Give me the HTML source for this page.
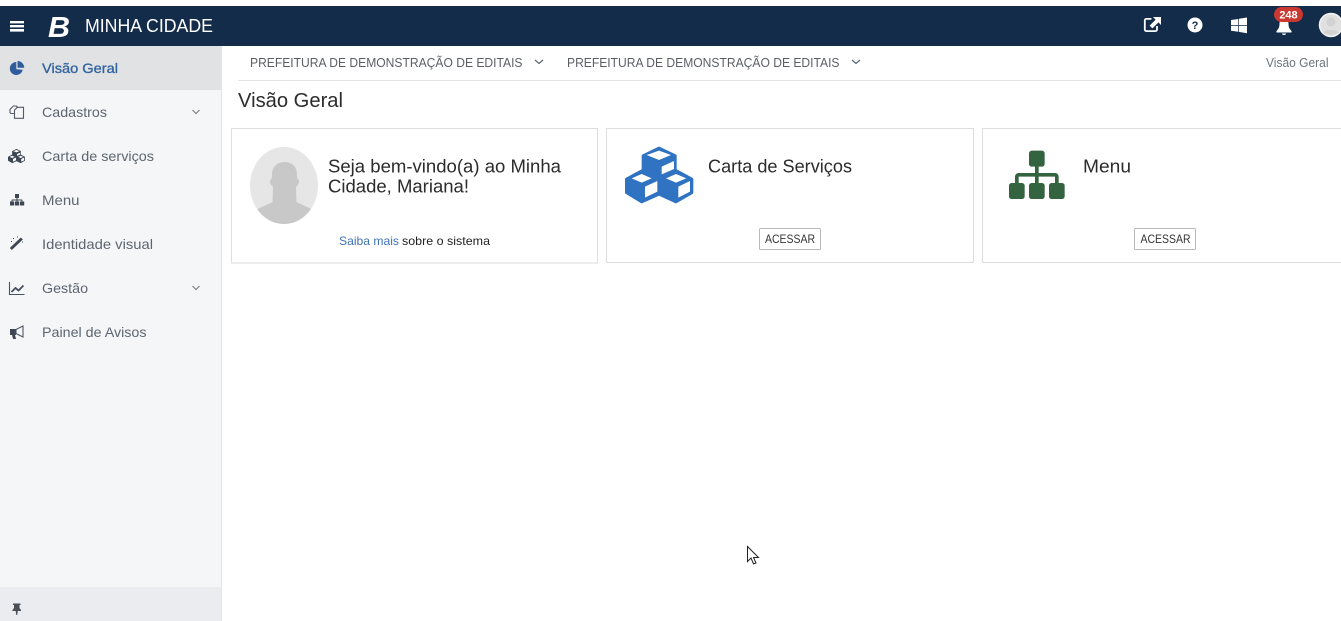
<!DOCTYPE html>
<html lang="pt-BR"><head><meta charset="utf-8"><title>Minha Cidade</title>
<style>
html,body{margin:0;padding:0;background:#fff;width:1341px;height:621px;overflow:hidden}
svg{display:block;font-family:"Liberation Sans",sans-serif}
</style></head><body>
<svg width="1341" height="621" viewBox="0 0 1341 621" xmlns="http://www.w3.org/2000/svg">
<defs>
<g id="cube3"><path fill="currentColor" stroke="currentColor" stroke-width="8" stroke-linejoin="round" d="M177 69L226 92V135L276 162V203L228 231L177 208L125 231L79 203V162L129 135V92Z"/>
<path fill="#fff" d="M140 90L177 77L213 90L177 105ZM185 125L222 108V132L185 148ZM95 160L125 147L155 160L125 173ZM135 185L172 168V200L135 218ZM198 160L228 147L259 160L228 173ZM235 185L270 168V200L235 218Z"/></g>
</defs>
<rect x="0" y="0" width="1341" height="621" fill="#fff"/>
<rect x="0" y="6" width="1341" height="40" fill="#132c4a"/>
<rect x="0" y="46" width="221" height="575" fill="#f5f6f8"/>
<rect x="221" y="46" width="1" height="575" fill="#e4e5e8"/>
<rect x="0" y="46" width="221" height="44" fill="#e1e2e4"/>
<rect x="0" y="587" width="221" height="34" fill="#ebecf0"/>

<path fill="#fff" d="M10 21h14v2.400H10zM10 25h14v2.400H10zM10 29h14v2.600H10z"/>
<text x="48" y="37" font-size="29" font-weight="700" font-style="italic" fill="#fff" textLength="22" lengthAdjust="spacingAndGlyphs">B</text>
<text x="85" y="32" font-size="18" fill="#fff" textLength="128" lengthAdjust="spacingAndGlyphs">MINHA CIDADE</text>

<path fill="none" stroke="#fff" stroke-width="1.800" d="M1157 26v3.500a1.600 1.600 0 0 1-1.600 1.600h-9a1.600 1.600 0 0 1-1.600-1.600v-9a1.600 1.600 0 0 1 1.600-1.600h5"/>
<path fill="#fff" d="M1153 17h8v8l-2.600-2.600-6 6-2.800-2.800 6-6z"/>
<circle cx="1195" cy="25" r="7.500" fill="#fff"/>
<text x="1195" y="29" font-size="11" font-weight="700" fill="#132c4a" text-anchor="middle">?</text>
<path fill="#fff" d="M1231 20l7.300-1v6h-7.300zM1239 18.800l8-1.300v7.500h-8zM1231 25.700h7.300v6l-7.300-1zM1239 25.700h8v7.500l-8-1.300z"/>
<path fill="#fff" d="M1284 18c3.500 0 4.500 3 4.500 6 0 3.500 1.200 5 3 7v1.500h-15V31c1.800-2 3-3.500 3-7 0-3 1-6 4.500-6zM1282 33.500h4a2 1.500 0 0 1-4 0z"/>
<rect x="1274" y="7" width="29" height="15" rx="7.500" fill="#c9392f"/>
<text x="1288.500" y="18.500" font-size="11" font-weight="700" fill="#fff" text-anchor="middle">248</text>
<circle cx="1331" cy="25" r="11.500" fill="#e0e0e0" stroke="#f2f2f2" stroke-width="1.500"/>
<circle cx="1331" cy="22" r="4.500" fill="#d2d2d2"/>
<path fill="#d2d2d2" d="M1323 33c2-4 14-4 16 0l-8 2z"/>

<text x="42" y="73" font-size="14" fill="#34659f" stroke="#34659f" stroke-width=".35" textLength="76" lengthAdjust="spacingAndGlyphs">Visão Geral</text>
<g font-size="14" fill="#5d6670">
<text x="42" y="117" textLength="65" lengthAdjust="spacingAndGlyphs">Cadastros</text>
<text x="42" y="161" textLength="112" lengthAdjust="spacingAndGlyphs">Carta de serviços</text>
<text x="42" y="205" textLength="37.500" lengthAdjust="spacingAndGlyphs">Menu</text>
<text x="42" y="249" textLength="111" lengthAdjust="spacingAndGlyphs">Identidade visual</text>
<text x="42" y="293" textLength="46" lengthAdjust="spacingAndGlyphs">Gestão</text>
<text x="42" y="337" textLength="104.500" lengthAdjust="spacingAndGlyphs">Painel de Avisos</text>
</g>
<path fill="#2f5d9c" d="M16.300 62a6.500 6.500 0 1 0 6.400 7.800l-6.400-.5z"/>
<path fill="#2f5d9c" d="M17.500 61v6.800h6.700a6.700 6.700 0 0 0-6.700-6.800z"/>
<g fill="none" stroke="#555b66" stroke-width="1.100"><path d="M14.300 113.500h-3.500l-.8-.8v-3.400l3.400-3.300h3l.6.600v1.500"/><path d="M14.500 110l2.800-2.700h6.200v11h-9z"/></g>
<g transform="translate(8,149) scale(.083) translate(-75,-65)" color="#3d4652"><use href="#cube3"/></g>
<g fill="#3d4652"><rect x="15" y="194" width="4" height="4"/><rect x="10" y="201.500" width="4.200" height="4"/><rect x="15" y="201.500" width="4.200" height="4"/><rect x="20" y="201.500" width="4.200" height="4"/><path d="M16.500 198h1v1.500h4.500l.5.500v1.500h-1v-1h-4v1h-1v-1h-4v1h-1V200l.5-.5h4.500z"/></g>
<path fill="#3d4652" d="M20.800 237.500l2 2-11 10.500-2-2z"/>
<path fill="#3d4652" d="M13 238h1v1h-1zM17 236.500h1v1h-1zM22 241.500h1v1h-1zM11 241h1v1h-1z"/>
<path fill="none" stroke="#46505e" stroke-width="1.100" d="M9.500 282v12.500h15"/>
<path fill="none" stroke="#46505e" stroke-width="1.800" d="M11.500 292l4-4 3 2.500 5-5"/>
<path fill="#3d4652" d="M10 329h6v6h-1l1 4h-3l-1-4h-2z"/>
<path fill="none" stroke="#4e5764" stroke-width="1.100" d="M16 329.500l7-3.500v11l-7-3.500z"/>
<path fill="#4b4f57" d="M13 603.500h7.500v1.500h-1v3l1.500 2v1h-3.200l-.6 4h-.9l-.6-4H12.500v-1l1.500-2v-3h-1z"/>
<g fill="none" stroke="#7b838c" stroke-width="1.200"><path d="M192.500 110l3.500 3.500 3.500-3.500"/><path d="M192.500 286l3.500 3.500 3.500-3.500"/></g>

<g font-size="13" fill="#5b5f64">
<text x="250" y="67" textLength="272.500" lengthAdjust="spacingAndGlyphs">PREFEITURA DE DEMONSTRAÇÃO DE EDITAIS</text>
<text x="567" y="67" textLength="272.500" lengthAdjust="spacingAndGlyphs">PREFEITURA DE DEMONSTRAÇÃO DE EDITAIS</text>
</g>
<g fill="none" stroke="#5b6470" stroke-width="1.200"><path d="M535 60l4 3.500 4-3.500"/><path d="M852 60l4 3.500 4-3.500"/></g>
<text x="1266" y="67" font-size="12.500" fill="#6c747c" textLength="62.500" lengthAdjust="spacingAndGlyphs">Visão Geral</text>
<rect x="238" y="80" width="1103" height="1" fill="#e3e3e3"/>
<text x="238" y="107" font-size="20" fill="#2b2b2b" textLength="105" lengthAdjust="spacingAndGlyphs">Visão Geral</text>

<g fill="#fff" stroke="#dedede">
<rect x="231.500" y="128.500" width="366" height="134.500"/>
<rect x="606.500" y="128.500" width="367" height="134"/>
<rect x="982.500" y="128.500" width="370" height="134"/>
</g>

<clipPath id="av"><ellipse cx="284" cy="185.500" rx="34" ry="38.500"/></clipPath>
<ellipse cx="284" cy="185.500" rx="34" ry="38.500" fill="#e6e6e6"/>
<g clip-path="url(#av)" fill="#c8c8c8">
<path d="M284.500 162c7 0 12.500 4 12.500 13v3c1.500 1 2.200 2.500 2 4-.2 2-1.500 3.500-3 5l.5 15 19 9v20h-62v-20l19-9 .5-15c-1.500-1.500-2.800-3-3-5-.2-1.500.5-3 2-4v-3c0-9 5.500-13 13.500-13z"/>
</g>
<g font-size="18" fill="#2b2b2b">
<text x="328" y="172.500" textLength="233" lengthAdjust="spacingAndGlyphs">Seja bem-vindo(a) ao Minha</text>
<text x="328" y="192.500" textLength="141" lengthAdjust="spacingAndGlyphs">Cidade, Mariana!</text>
<text x="708" y="172.500" textLength="144" lengthAdjust="spacingAndGlyphs">Carta de Serviços</text>
<text x="1083" y="172.500" textLength="48" lengthAdjust="spacingAndGlyphs">Menu</text>
</g>
<text x="339" y="245" font-size="12" fill="#3f74b5" textLength="60" lengthAdjust="spacingAndGlyphs">Saiba mais</text>
<text x="402" y="245" font-size="12" fill="#222" textLength="88" lengthAdjust="spacingAndGlyphs">sobre o sistema</text>

<g transform="translate(600,125) scale(.33333)" color="#2f73c2"><use href="#cube3"/></g>

<g transform="translate(980,125) scale(.33333)" fill="#33633f">
<rect x="147" y="77" width="47" height="48" rx="8"/>
<rect x="87" y="174" width="47" height="48" rx="8"/>
<rect x="147" y="174" width="47" height="48" rx="8"/>
<rect x="207" y="174" width="47" height="48" rx="8"/>
<rect x="165" y="120" width="11" height="60"/>
<path d="M105 180v-25c0-6 5-11 11-11h109c6 0 11 5 11 11v25h-11v-25H116v25z"/>
</g>

<g fill="#fff" stroke="#b9b9b9">
<rect x="759.500" y="228.500" width="61" height="21" rx="1"/>
<rect x="1134.500" y="228.500" width="61" height="21" rx="1"/>
</g>
<g font-size="12" fill="#333">
<text x="765" y="243" textLength="50" lengthAdjust="spacingAndGlyphs">ACESSAR</text>
<text x="1140.500" y="243" textLength="50" lengthAdjust="spacingAndGlyphs">ACESSAR</text>
</g>

<path fill="#fff" stroke="#222" stroke-width="1" d="M747.500 546.500v15l3.500-3.500 2.500 6 2.500-1-2.500-5.500h5z"/>
</svg>
</body></html>
